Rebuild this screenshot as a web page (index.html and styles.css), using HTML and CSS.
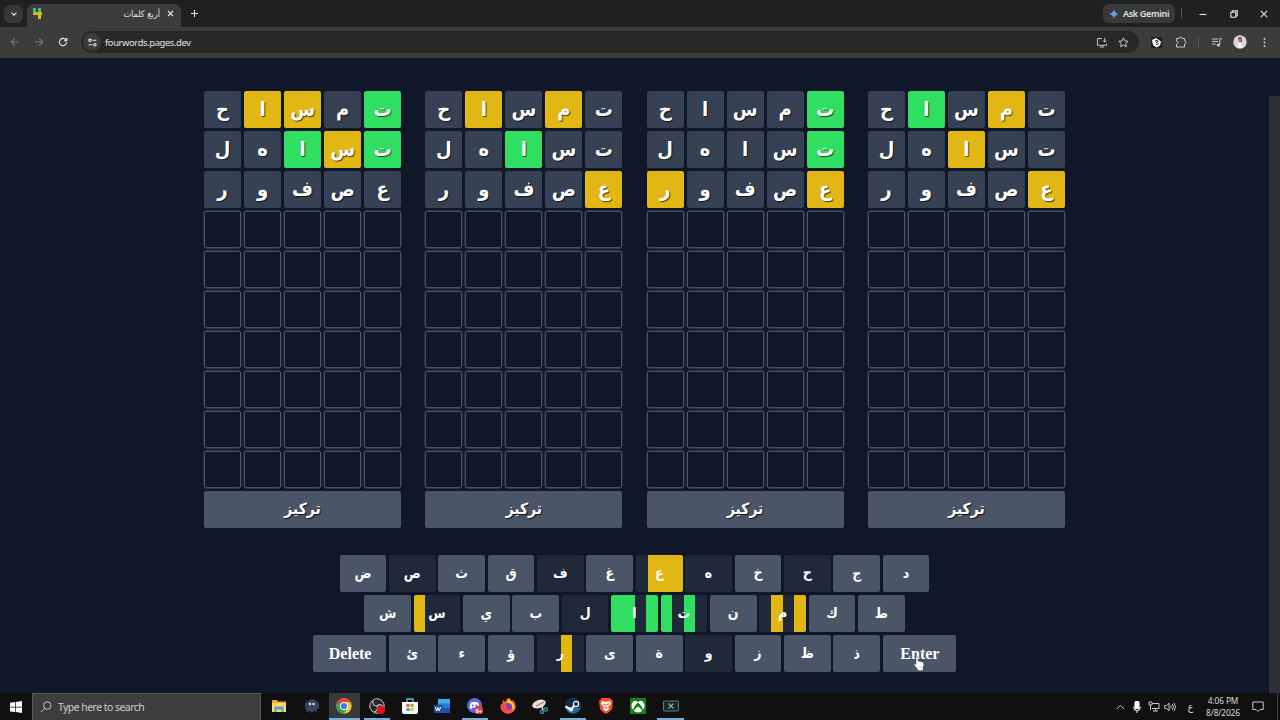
FILE: index.html
```html
<!DOCTYPE html>
<html lang="en">
<head>
<meta charset="utf-8">
<title>أربع كلمات</title>
<link rel="stylesheet" href="styles.css">
</head>
<body>
<div class="screen">
  <header class="tabstrip">
    <div class="tab-search"><svg width="8" height="8" viewBox="0 0 8 8"><path d="M1.500 2.700 4 5.200 6.500 2.700" class="ln bright"/></svg></div>
    <div class="tab">
      <svg width="10" height="11" viewBox="0 0 10 11"><path d="M0 0h3v4h2V0h3v5H0z" fill="#2fc878"/><path d="M0 4h9v3H8v4H5V7H0z" fill="#e2b912"/><path d="M0 4h3v1H0zM5 3h3v2H5z" fill="#7fc05a"/></svg>
      <span class="tab-title" dir="rtl">أربع كلمات</span>
      <svg width="7" height="7" viewBox="0 0 7 7"><path d="M1 1l5 5M6 1 1 6" class="ln bright"/></svg>
    </div>
    <svg class="plus" width="9" height="9" viewBox="0 0 9 9"><path d="M4.500 1v7M1 4.500h7" class="ln bright"/></svg>
    <div class="gemini">
      <svg width="10" height="10" viewBox="0 0 10 10"><defs><linearGradient id="gem" x1="0" y1="0" x2="1" y2="1"><stop offset="0" stop-color="#e8695c"/><stop offset=".45" stop-color="#6aa5e8"/><stop offset="1" stop-color="#4d7cf0"/></linearGradient></defs><path d="M5 0Q5.800 4.200 10 5 5.800 5.800 5 10 4.200 5.800 0 5 4.200 4.200 5 0z" fill="url(#gem)"/></svg>
      <span>Ask Gemini</span>
    </div>
    <i class="sep"></i>
    <div class="win-buttons">
      <svg width="8" height="8" viewBox="0 0 8 8"><path d="M.5 4.500h7" class="ln bright"/></svg>
      <svg width="8" height="8" viewBox="0 0 8 8"><path d="M.8 2.300h5v5h-5zM2.300 2.300V.8h5v5H5.800" class="ln bright"/></svg>
      <svg width="8" height="8" viewBox="0 0 8 8"><path d="M.8.8l6.400 6.400M7.200.8.8 7.200" class="ln bright"/></svg>
    </div>
  </header>
  <nav class="toolbar">
    <div class="nav-icons">
      <svg width="10" height="10" viewBox="0 0 10 10"><path d="M9 5H1.300M4.800 1.300 1.200 5l3.600 3.700" class="ln dim"/></svg>
      <svg width="10" height="10" viewBox="0 0 10 10"><path d="M1 5h7.700M5.200 1.300 8.800 5 5.200 8.700" class="ln dim"/></svg>
      <svg width="10" height="10" viewBox="0 0 10 10"><path d="M8.600 5.300A3.600 3.600 0 1 1 7.600 2.500L8.600 3.500M8.800 1v2.700H6" class="ln bright"/></svg>
    </div>
    <div class="omnibox">
      <span class="site"><svg width="9" height="9" viewBox="0 0 9 9"><path d="M4.500 2.300h3.800M.7 6.700h3.600" class="ln bright"/><circle cx="2" cy="2.300" r="1.200" class="ln bright"/><circle cx="6.900" cy="6.700" r="1.200" class="ln bright"/></svg></span>
      <span class="url">fourwords.pages.dev</span>
      <svg class="install" width="12" height="11" viewBox="0 0 12 11"><path d="M6 1.500H1.500v6.800h9V6.500M4 10h4M8.700 1v4M7 3.500l1.700 1.700 1.700-1.700" class="ln"/></svg>
      <svg width="11" height="11" viewBox="0 0 11 11"><path d="M5.500.9l1.400 3 3.200.4-2.400 2.200.7 3.300-2.900-1.700-2.900 1.700.7-3.300L.9 4.300l3.200-.4z" class="ln"/></svg>
    </div>
    <div class="ext-icons">
      <svg class="e1" width="11" height="11" viewBox="0 0 11 11"><path d="M0 0h11v11H0z" fill="#1b2029"/><path d="M1 3l4-2 5 3.500L9 8.500l-3.500 2L2 8z" fill="#fff"/><path d="M4 4l2.500-.7L7 5 5 5.500M5 7.300 7.500 7" class="ln ink"/></svg>
      <svg class="e2" width="12" height="12" viewBox="0 0 12 12"><path d="M1.500 2.500h2.700Q4.500 1 5.700 1t1.500 1.500H9.500V5Q11 5.200 11 6.500T9.500 8v3h-8V8.300Q3 8 3 6.700T1.500 5.200z" class="ln"/></svg>
      <i class="sep"></i>
      <svg class="e3" width="12" height="11" viewBox="0 0 12 11"><path d="M1 2h6M1 4.500h6M1 7h3.500M8.800 8V1.800H11" class="ln"/><circle cx="7.300" cy="8" r="1.600" fill="#ccc"/></svg>
      <svg class="e4" width="14" height="14" viewBox="0 0 14 14"><circle cx="7" cy="7" r="6.700" fill="#dbd5d6"/><path d="M5 3q3-2.500 4 1v3H6z" fill="#6b3041"/><ellipse cx="7" cy="5" rx="1.400" ry="1.800" fill="#bd8588"/><path d="M4 13l2-5h2l2 5z" fill="#f4f3f4"/></svg>
      <svg class="e5" width="3" height="11" viewBox="0 0 3 11"><g fill="#c7c7c7"><circle cx="1.500" cy="2" r="1"/><circle cx="1.500" cy="5.500" r="1"/><circle cx="1.500" cy="9" r="1"/></g></svg>
    </div>
  </nav>
  <main class="page">
    <div class="game">
      <div class="boards" id="boards"></div>
      <div class="keyboard" id="keyboard"></div>
    </div>
    <div class="scrollbar"></div>
    <svg class="pointer" width="12" height="17" viewBox="0 0 12 17"><path d="M3 1.500q1.300-1 2 .3V6l4.500 1q1.500.5 1.300 2.500L10 13v2.500H4.500V14L1 10q-.5-1.700 1-1.200l1 .8z" fill="#fff" stroke="#333" stroke-width=".4"/><path d="M6 11v2M8 11v2" stroke="#aaa" stroke-width=".4"/></svg>
  </main>
  <footer class="taskbar">
    <div class="start"><svg width="12" height="12" viewBox="0 0 12 12"><path d="M0 1.700 5.300 1v4.700H0zM6 .9 12 0v5.700H6zM0 6.400h5.300v4.700L0 10.400zM6 6.400h6V12l-6-.9z" fill="#fff"/></svg></div>
    <div class="search"><svg width="12" height="12" viewBox="0 0 12 12"><circle cx="7.300" cy="4.600" r="3.700" class="ln"/><path d="M4.700 7.300.8 11.200" class="ln"/></svg><span>Type here to search</span></div>
    <div class="apps">
      <div class="app"><svg viewBox="0 0 16 16"><path d="M1 2h5l1 1.500h8V14H1z" fill="#e5a93b"/><path d="M1 5h14v9H1z" fill="#fbd667"/><path d="M3.500 8.500h9V14h-2v-2.500h-5V14h-2z" fill="#4ba3cf"/></svg></div>
      <div class="app"><svg viewBox="0 0 16 16"><path d="M8 1q3 0 4.500 2L15 5v5l-2 1v3l-3-1-2 2-3-2-3 1v-3L1 9V5l3-2z" fill="#34445e"/><circle cx="6" cy="6" r="1.200" fill="#dcf3ff"/><circle cx="9.500" cy="6" r="1.200" fill="#dcf3ff"/></svg></div>
      <div class="app open active"><svg viewBox="0 0 16 16"><circle cx="8" cy="8" r="7.700" fill="#f9c431"/><path d="M1.330 4.150A7.700 7.700 0 0 1 14.670 4.150H8L4.670 9.900z" fill="#e14436"/><path d="M1.330 4.150A7.700 7.700 0 0 0 8 15.700l3.300-5.800H4.670z" fill="#35a453"/><circle cx="8" cy="8" r="4" fill="#fff"/><circle cx="8" cy="8" r="3.100" fill="#3c7ee8"/></svg></div>
      <div class="app open"><svg viewBox="0 0 16 16"><circle cx="8" cy="8" r="7.200" fill="#252427" stroke="#c8c8c8"/><path d="M8 8Q3 8 4 3M8 8q4-3 6 1M8 8q2 4-3 6" fill="none" stroke="#c8c8c8" stroke-width="1.200"/><circle cx="12" cy="12" r="4" fill="#e80f18"/></svg></div>
      <div class="app"><svg viewBox="0 0 16 16"><path d="M5 4V1h6v3" fill="none" stroke="#5dbdec" stroke-width="1.300"/><path d="M0 4h16v10q0 2-2 2H2q-2 0-2-2z" fill="#f5f5f5"/><path d="M4.500 6h3v3h-3z" fill="#ee5938"/><path d="M8.500 6h3v3h-3z" fill="#80ba35"/><path d="M4.500 10h3v3h-3z" fill="#2ba5df"/><path d="M8.500 10h3v3h-3z" fill="#f7b928"/></svg></div>
      <div class="app"><svg viewBox="0 0 16 16"><path d="M4 1h12v5H4z" fill="#41a9ec"/><path d="M4 5.500h12v5H4z" fill="#277bd3"/><path d="M4 10h12v5H4z" fill="#1954b0"/><path d="M0 7h8v8H0z" fill="#1551a3"/><path d="M1.500 9l1.200 4L4 9.500 5.300 13 6.500 9" fill="none" stroke="#fff"/></svg></div>
      <div class="app open"><svg viewBox="0 0 16 16"><circle cx="7.500" cy="7.500" r="7.500" fill="#5865e5"/><path d="M4 4.500q3.500-1.500 7 0 2 3 1.500 5.500l-2 1-1-1.500h-4l-1 1.500-2-1Q2.500 7.500 4 4.500z" fill="#fff"/><circle cx="5.800" cy="7.500" r="1" fill="#5865e5"/><circle cx="9.200" cy="7.500" r="1" fill="#5865e5"/><circle cx="12" cy="12" r="4.500" fill="#d53f46"/><text x="8.500" y="14.500" class="badge">9+</text></svg></div>
      <div class="app"><svg viewBox="0 0 16 16"><path d="M3 2l2 2q1-3 4-4 1 2 3 3l1-1q5 6 1 11-4 4-9 2-6-3-4-9l1 1z" fill="#f7682b"/><path d="M9 0q1 3 4 5 3 5-1 8 2-6-5-8z" fill="#ffc735"/><circle cx="8" cy="9" r="4" fill="#7945b5"/><path d="M1 6q3 0 7 1l-2 2q0 2 3 3 2 0 4-1-2 5-7 4-5-2-5-9z" fill="#fa4550"/></svg></div>
      <div class="app"><svg viewBox="0 0 16 16"><ellipse cx="7" cy="6" rx="7" ry="4" transform="rotate(-20 7 6)" fill="#e5dede"/><path d="M4 8l8-4" stroke="#b55759" stroke-width="1"/><path d="M8 9l5 3M11 8l-1 5" stroke="#ddd"/><circle cx="10" cy="14" r="1.600" fill="none" stroke="#3a99b8" stroke-width="1.200"/><circle cx="14" cy="11.500" r="1.600" fill="none" stroke="#3a99b8" stroke-width="1.200"/></svg></div>
      <div class="app open"><svg viewBox="0 0 16 16"><circle cx="8" cy="8" r="7.800" fill="#1b6ba5"/><path d="M.3 7A7.800 7.800 0 0 1 15.700 7L14 10H2z" fill="#15264b"/><path d="M.5 8.500l5.500 3 3.500-4" fill="none" stroke="#fff" stroke-width="2.300"/><circle cx="11" cy="6" r="2.600" fill="#15264b" stroke="#fff" stroke-width="1.200"/><circle cx="6" cy="11.500" r="2" fill="#fff"/></svg></div>
      <div class="app"><svg viewBox="0 0 16 16"><path d="M4 0h8l3 3-1 8q-2 3-6 5-4-2-6-5L1 3z" fill="#f4512b"/><path d="M4 3l4 1 4-1 1 3-3 3 1 2-3 2.500L5 11l1-2-3-3z" fill="#fff"/><path d="M5 6l2 .5M11 6l-2 .5M8 6v4M6.500 10h3" stroke="#f4512b"/></svg></div>
      <div class="app"><svg viewBox="0 0 16 16"><path d="M0 0h16v16H0z" fill="#158116"/><circle cx="8" cy="8" r="6.500" fill="#fff"/><path d="M3 13Q5 7 8 5q3 2 5 8-2-3-5-5-3 2-5 5zM4 2q2 0 4 1.500Q10 2 12 2 8 0 4 2z" fill="#158116" stroke="#158116"/></svg></div>
      <div class="app open"><svg viewBox="0 0 16 16"><rect x=".5" y="3" width="15" height="10" rx="1" fill="#18272a" stroke="#657b7c"/><path d="M5.500 5.500l5 5M10.500 5.500l-5 5" stroke="#86b0ac" stroke-width="1.200"/></svg></div>
    </div>
    <div class="tray">
      <svg class="t1" width="9" height="6" viewBox="0 0 9 6"><path d="M1 5l3.500-3.700L8 5" class="ln"/></svg>
      <svg class="t2" width="8" height="12" viewBox="0 0 8 12"><rect x="1.500" y="0" width="5" height="8" rx="1.500" fill="#fff"/><path d="M.8 5.500q0 4 3.200 4t3.200-4M4 9v3" class="ln bright"/></svg>
      <svg class="t3" width="12" height="11" viewBox="0 0 12 11"><path d="M4.500 2.500H11v5H4M7.500 7.500V10M5 10h5M1 1h3v3H1zM2.500 4v5" class="ln"/></svg>
      <svg class="t4" width="12" height="10" viewBox="0 0 12 10"><path d="M.7 3.500h2L5 1.200v7.600L2.700 6.500h-2zM6.700 3.500q1 1.500 0 3M8.300 2q2.200 3 0 6M10 .8q3 4.200 0 8.400" class="ln"/></svg>
      <span class="lang">ع</span>
      <div class="clock"><span>4:06 PM</span><span>8/8/2026</span></div>
      <svg class="t5" width="12" height="12" viewBox="0 0 12 12"><path d="M.8 1h10.400v7.500H8l-2 2-2-2H.8z" class="ln"/></svg>
      <i class="peek"></i>
    </div>
  </footer>
</div>
<script src="game.js"></script>
</body>
</html>
```
FILE: styles.css
```css
* { box-sizing: border-box; }
body { margin: 0; background: #0f1729; font-family: "Noto Sans", "DejaVu Sans", sans-serif; }
svg { display: block; flex: none; }
.screen { width: 1280px; height: 720px; display: flex; flex-direction: column; overflow: hidden; }
.ln { fill: none; stroke: #c7c7c7; stroke-width: 1; }
.bright { stroke: #e6e6e6; stroke-width: 1.1; }
.dim { stroke: #777; stroke-width: 1.1; }
.ink { stroke: #222; }
.sep { width: 1px; height: 11px; background: #555; }

.tabstrip { height: 27px; flex: none; display: flex; align-items: center; background: #1f2120; color: #e3e3e3; }
.tab-search { width: 19px; height: 18px; margin-left: 4px; border-radius: 6px; background: #363737; display: flex; align-items: center; justify-content: center; }
.tab { width: 154px; height: 23px; margin-left: 4px; align-self: flex-end; padding: 0 7px 4px 6px; border-radius: 7px 7px 0 0; background: #3c3c3c; display: flex; align-items: center; }
.tab-title { flex: 1; padding-right: 7px; font: 9px "DejaVu Sans Condensed", "DejaVu Sans", sans-serif; letter-spacing: -.1px; white-space: nowrap; }
.plus { margin-left: 9px; }
.gemini { width: 72px; height: 19px; margin-left: auto; padding-left: 6px; border-radius: 6px; background: #383939; display: flex; align-items: center; gap: 4px; font-size: 9px; font-weight: 600; letter-spacing: -.33px; white-space: nowrap; }
.tabstrip .sep { margin-left: 6px; }
.win-buttons { display: flex; gap: 22.5px; margin: 0 12px 0 17px; }

.toolbar { height: 31px; flex: none; display: flex; align-items: center; padding-bottom: 1px; background: #3c3c3c; color: #e3e3e3; }
.nav-icons { display: flex; gap: 14px; padding-left: 10px; }
.omnibox { width: 1058px; height: 22px; margin-left: 13px; padding: 0 10px 0 2px; border-radius: 11px; background: #282828; display: flex; align-items: center; }
.site { width: 18px; height: 18px; border-radius: 50%; background: #3c3c3c; display: flex; align-items: center; justify-content: center; }
.url { padding-left: 4px; font-size: 9.4px; letter-spacing: -.38px; }
.install { margin: 0 10px 0 auto; }
.ext-icons { display: flex; align-items: center; }
.e1 { margin-left: 12px; }
.e2 { margin-left: 13px; }
.ext-icons .sep { margin-left: 11px; }
.e3 { margin-left: 12px; }
.e4 { margin-left: 10px; }
.e5 { margin-left: 16px; }

.page { position: relative; height: 635px; flex: none; display: flex; background: #0f1729; }
.game { flex: 1; display: flex; flex-direction: column; align-items: center; padding-top: 33px; font-family: "Liberation Serif", "DejaVu Sans Condensed", "DejaVu Sans", serif; font-weight: 700; color: #fff; }
.scrollbar { width: 11px; margin-top: 38px; background: #2e2d38; }
.boards { display: flex; gap: 24.3px; }
.board { width: 197px; display: grid; grid-template-columns: repeat(5, 37px); grid-auto-rows: 37px; gap: 3px; }
.tile { border-radius: 2px; padding-bottom: 2px; display: flex; align-items: center; justify-content: center; font-size: 20px; line-height: 20px; text-shadow: 1px 1px 1px #000a; }
.empty { border: 1px solid #465163; box-shadow: 0 0 0 .4px #465163; }
.absent { background: #364153; }
.present { background: #e2b714; }
.correct { background: #30df62; }
.focus { grid-column: 1 / -1; padding-bottom: 2px; border-radius: 2px; background: #4a5668; display: flex; align-items: center; justify-content: center; font-size: 15.500px; text-shadow: 1px 1px 1px #000c; }
.keyboard { margin-top: 27px; display: flex; flex-direction: column; align-items: center; gap: 3px; }
.krow { display: flex; gap: 2.7px; }
.key { width: 46.7px; height: 37px; border-radius: 2px; background: #4a5668; display: flex; align-items: center; justify-content: center; font-size: 14px; }
.key.used { background-color: #1f293a; }
.key.wide { width: 73.3px; padding-left: 1px; font-size: 16px; }
.pointer { position: absolute; left: 913px; top: 597px; }

.taskbar { height: 27px; flex: none; display: flex; align-items: stretch; background: #101010; color: #ddd; }
.start { width: 32px; display: flex; align-items: center; justify-content: center; }
.search { width: 229px; display: flex; align-items: center; gap: 6px; padding-left: 7px; border: 1px solid #5a5a5a; border-bottom: 0; background: #3d3d3d; font-size: 10.4px; letter-spacing: -.5px; color: #cfcfcf; }
.apps { display: flex; padding-left: 1.800px; }
.app { width: 32.650px; padding: 0 3px; display: flex; align-items: center; justify-content: center; border-bottom: 2px solid transparent; }
.app svg { width: 16px; height: 16px; }
.open { padding: 0; margin: 0 3px; width: 26.650px; border-color: #78aedb; }
.active { background: #383838; width: 30.650px; margin: 0 1px; }
.badge { font: 700 6px "Liberation Sans", sans-serif; fill: #fff; }
.tray { margin-left: auto; display: flex; align-items: center; font-size: 8.300px; letter-spacing: -.1px; }
.t2 { margin-left: 8px; }
.t3 { margin-left: 7px; }
.t4 { margin-left: 4px; }
.lang { margin-left: 12px; font: 10px "DejaVu Sans Condensed", "DejaVu Sans", sans-serif; }
.clock { width: 44px; margin-left: 8px; display: flex; flex-direction: column; align-items: center; line-height: 12px; white-space: nowrap; }
.t5 { margin: 0 13px 0 7px; }
.peek { width: 1px; align-self: stretch; margin-right: 2px; background: #444; }
```
FILE: game.js
```js
const ROWS = 10;
const guesses = ["حاسمت", "لهاست", "روفصع"];
// a = absent, p = present, c = correct; cells run left to right
const results = [
  ["appac", "aacpc", "aaaaa"],
  ["apapa", "aacaa", "aaaap"],
  ["aaaac", "aaaac", "paaap"],
  ["acapa", "aapaa", "aaaap"]
];
const names = { a: "absent", p: "present", c: "correct" };

function add(parent, className, text = "") {
  const el = document.createElement("div");
  el.className = className;
  el.textContent = text;
  parent.append(el);
  return el;
}

const boards = document.getElementById("boards");
for (const result of results) {
  const board = add(boards, "board");
  for (let r = 0; r < ROWS; r++) {
    for (let c = 0; c < 5; c++) {
      if (r < guesses.length) add(board, "tile " + names[result[r][c]], guesses[r][c]);
      else add(board, "tile empty");
    }
  }
  add(board, "focus", "تركيز");
}

const used = new Set(guesses.join(""));
const stripes = { "ع": "-ppp", "س": "p---", "ا": "cc-c", "ت": "c-c-", "م": "-p-p", "ر": "--p-" };
const colours = { "-": "#1f293a", p: "#e2b714", c: "#30df62" };
const keyboard = document.getElementById("keyboard");
const rows = [
  [..."ضصثقفغعهخحجد"],
  [..."شسيبلاتنمكط"],
  ["Delete", ..."ئءؤرىةوزظذ", "Enter"]
];
for (const letters of rows) {
  const row = add(keyboard, "krow");
  for (const letter of letters) {
    const key = add(row, "key" + (letter.length > 1 ? " wide" : used.has(letter) ? " used" : ""), letter);
    if (stripes[letter]) {
      const stops = [...stripes[letter]].map((s, i) => `${colours[s]} ${i * 25}% ${i * 25 + 25}%`);
      key.style.backgroundImage = `linear-gradient(to right, ${stops.join(",")})`;
    }
  }
}
```
